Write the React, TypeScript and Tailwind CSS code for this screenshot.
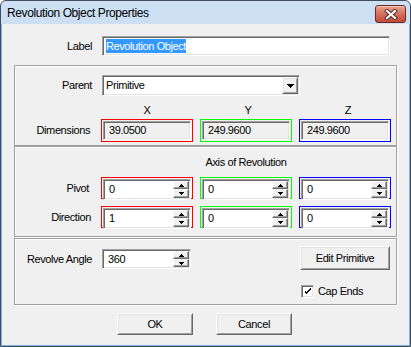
const sunken =
   'border border-t-[#a0a0a0] border-l-[#a0a0a0] border-b-white border-r-white shadow-[inset_1px_1px_0_#696969,inset_-1px_-1px_0_#e3e3e3]'
const raised =
   'border border-t-white border-l-white border-b-[#696969] border-r-[#696969] shadow-[inset_1px_1px_0_#e3e3e3,inset_-1px_-1px_0_#a0a0a0] bg-[#f0f0f0]'
const etched = 'border border-[#a0a0a0] shadow-[inset_1px_1px_0_#fff,1px_1px_0_#fff]'

const Tri = ({ up, w }: { up?: boolean; w: number }) => {
   const h = Math.ceil(w / 2)
   return (
      <svg width={w} height={h} shapeRendering="crispEdges">
         <polygon points={up ? `${w / 2},0 ${w},${h} 0,${h}` : `0,0 ${w},0 ${w / 2},${h}`} fill="#000" />
      </svg>
   )
}

const SpinBtn = ({ up }: { up?: boolean }) => (
   <div className="flex flex-1 items-center justify-center border border-t-white border-l-white border-b-[#696969] border-r-[#696969] bg-[#f0f0f0] shadow-[inset_-1px_-1px_0_#a0a0a0]">
      <Tri up={up} w={5} />
   </div>
)

const Spin = ({ value, className = '' }: { value: string; className?: string }) => (
   <div className={`flex bg-white p-px ${sunken} ${className}`}>
      <div className="flex flex-1 items-center pl-[4px]">{value}</div>
      <div className="flex w-[16px] flex-col">
         <SpinBtn up />
         <SpinBtn />
      </div>
   </div>
)

const Colored = ({ color, children, h }: { color: string; children: React.ReactNode; h: string }) => (
   <div className={`flex w-[92px] flex-col border-[1px] p-px ${color} ${h}`}>{children}</div>
)

const ReadOnly = ({ value }: { value: string }) => (
   <div className={`flex flex-1 items-center bg-[#f0f0f0] pl-[5px] ${sunken}`}>{value}</div>
)

const CloseButton = () => (
   <div className="flex h-[18px] w-[31px] items-center justify-center rounded-[3px] border border-[#6b2a20] bg-gradient-to-b from-[#e8a493] via-[#d4705d] to-[#c24a36] shadow-[inset_0_1px_0_#f3c7bb]">
      <svg width="14" height="11" viewBox="0 0 14 11">
         <path d="M3 2 L11 9 M11 2 L3 9" stroke="#4a2a26" strokeWidth="4" strokeLinecap="square" />
         <path d="M3 2 L11 9 M11 2 L3 9" stroke="#fff" strokeWidth="2.2" strokeLinecap="square" />
      </svg>
   </div>
)

export default function App() {
   return (
      <div className="h-[347px] w-[411px] font-['Liberation_Sans',Arial,sans-serif] text-[11px] tracking-[-0.4px] text-black">
         <div className="flex h-full flex-col rounded-t-[6px] border border-[#3f4d5e] bg-gradient-to-b from-[#cde0f4] to-[#b9d1ea]">
            {/* title bar */}
            <div className="flex h-[23px] items-start justify-between pr-[4px] pl-[6px]">
               <span className="mt-[5px] text-[12px] leading-[14px]">Revolution Object Properties</span>
               <div className="mt-[4px]">
                  <CloseButton />
               </div>
            </div>

            {/* client */}
            <div className="flex flex-1 flex-col border border-t-0 border-[#7fb0e3] bg-[#f0f0f0]">
               <div className="mt-[12px] flex h-[20px] items-center">
                  <div className="w-[90px] text-right">Label</div>
                  <div className={`ml-[10px] flex h-full w-[288px] items-center bg-white pl-[3px] ${sunken}`}>
                     <span className="bg-[#3399ff] leading-[14px] text-white">Revolution Object</span>
                  </div>
               </div>

               {/* group 1 */}
               <div className={`mt-[9px] ml-[12px] flex h-[81px] w-[383px] flex-col ${etched}`}>
                  <div className="mt-[9px] flex h-[21px] items-center">
                     <div className="w-[77px] text-right">Parent</div>
                     <div className={`ml-[10px] flex h-full w-[198px] items-center bg-white pl-[3px] ${sunken}`}>
                        <span className="flex-1">Primitive</span>
                        <div className={`mr-px flex h-[17px] w-[16px] items-center justify-center ${raised}`}>
                           <Tri w={7} />
                        </div>
                     </div>
                  </div>
                  <div className="mt-[8px] flex h-[13px] items-center">
                     <div className="w-[77px]" />
                     <div className="ml-[9px] flex gap-[7px]">
                        <div className="w-[92px] text-center">X</div>
                        <div className="w-[92px] pl-[4px] text-center">Y</div>
                        <div className="w-[92px] pl-[6px] text-center">Z</div>
                     </div>
                  </div>
                  <div className="mt-[2px] flex items-center">
                     <div className="w-[77px] pr-[2px] text-right">Dimensions</div>
                     <div className="ml-[9px] flex gap-[7px]">
                        <Colored color="border-[#ff0000]" h="h-[23px]">
                           <ReadOnly value="39.0500" />
                        </Colored>
                        <Colored color="border-[#00ff00]" h="h-[23px]">
                           <ReadOnly value="249.9600" />
                        </Colored>
                        <Colored color="border-[#0000ff]" h="h-[23px]">
                           <ReadOnly value="249.9600" />
                        </Colored>
                     </div>
                  </div>
               </div>

               {/* group 2 */}
               <div className={`ml-[12px] flex h-[91px] w-[383px] flex-col ${etched}`}>
                  <div className="mt-[9px] flex h-[13px] items-center">
                     <div className="w-[77px]" />
                     <div className="ml-[9px] w-[290px] text-center">Axis of Revolution</div>
                  </div>
                  <div className="mt-[8px] flex items-center">
                     <div className="w-[77px] pr-[3px] text-right">Pivot</div>
                     <div className="ml-[9px] flex gap-[7px]">
                        <Colored color="border-[#ff0000]" h="h-[22px]">
                           <Spin value="0" className="flex-1" />
                        </Colored>
                        <Colored color="border-[#00ff00]" h="h-[22px]">
                           <Spin value="0" className="flex-1" />
                        </Colored>
                        <Colored color="border-[#0000ff]" h="h-[22px]">
                           <Spin value="0" className="flex-1" />
                        </Colored>
                     </div>
                  </div>
                  <div className="mt-[7px] flex items-center">
                     <div className="w-[77px] pr-px text-right">Direction</div>
                     <div className="ml-[9px] flex gap-[7px]">
                        <Colored color="border-[#ff0000]" h="h-[22px]">
                           <Spin value="1" className="flex-1" />
                        </Colored>
                        <Colored color="border-[#00ff00]" h="h-[22px]">
                           <Spin value="0" className="flex-1" />
                        </Colored>
                        <Colored color="border-[#0000ff]" h="h-[22px]">
                           <Spin value="0" className="flex-1" />
                        </Colored>
                     </div>
                  </div>
               </div>

               {/* group 3 */}
               <div className={`mt-px ml-[12px] flex h-[67px] w-[383px] flex-col ${etched}`}>
                  <div className="mt-[7px] flex items-start">
                     <div className="mt-[3px] flex h-[20px] w-[77px] items-center justify-end">Revolve Angle</div>
                     <Spin value="360" className="mt-[3px] ml-[10px] h-[20px] w-[89px]" />
                     <div className={`ml-[109px] flex h-[24px] w-[90px] items-center justify-center ${raised}`}>
                        Edit Primitive
                     </div>
                  </div>
                  <div className="mt-[13px] ml-[286px] flex items-center">
                     <div className={`flex h-[13px] w-[13px] items-center justify-center bg-white ${sunken}`}>
                        <svg width="7" height="7" viewBox="0 0 7 7" shapeRendering="crispEdges">
                           <path d="M0 2h1v3h1v1h1v-1h1v-1h1v-1h1v-1h1v-2h-1v1h-1v1h-1v1h-1v1h-1v-1h-1v-1h-1z" fill="#000" />
                        </svg>
                     </div>
                     <span className="ml-[4px]">Cap Ends</span>
                  </div>
               </div>

               <div className="mt-[8px] flex">
                  <div className={`ml-[115px] flex h-[22px] w-[76px] items-center justify-center ${raised}`}>OK</div>
                  <div className={`ml-[23px] flex h-[22px] w-[76px] items-center justify-center ${raised}`}>Cancel</div>
               </div>
            </div>
         </div>
      </div>
   )
}
